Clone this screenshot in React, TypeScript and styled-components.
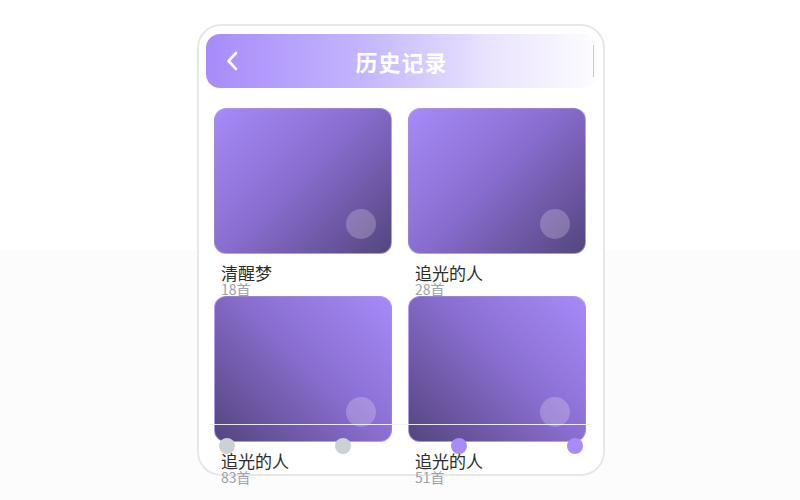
import React from 'react'
import styled, { createGlobalStyle } from 'styled-components'

const GlobalStyle = createGlobalStyle`
  html, body {
    margin: 0;
    padding: 0;
  }
  body {
    min-height: 500px;
    background: linear-gradient(180deg, #ffffff 0%, #ffffff 50%, #fcfcfd 50%, #fcfcfd 100%);
    font-family: "Noto Sans CJK SC", "Noto Sans", sans-serif;
  }
`

const albums = [
  { name: '清醒梦', count: 18, flip: false },
  { name: '追光的人', count: 28, flip: false },
  { name: '追光的人', count: 83, flip: true },
  { name: '追光的人', count: 51, flip: true },
]

const dots = [false, false, true, true]

export default function App() {
  return (
    <>
      <GlobalStyle />
      <Page>
        <Phone>
          <Header>
            <BackButton aria-label="back">
              <svg width="14" height="22" viewBox="0 0 14 22" fill="none">
                <path d="M11 3L3.5 11 11 19" stroke="#fff" strokeWidth="2.6" strokeLinecap="round" strokeLinejoin="round" />
              </svg>
            </BackButton>
            <Title>历史记录</Title>
          </Header>
          <Grid>
            {albums.map((a, i) => (
              <Item key={i}>
                <Cover flip={a.flip}>
                  <PlayDot />
                </Cover>
                <Name>{a.name}</Name>
                <Count>{a.count}首</Count>
              </Item>
            ))}
          </Grid>
          <Track />
          <Dots>
            {dots.map((on, i) => (
              <Dot key={i} active={on} />
            ))}
          </Dots>
        </Phone>
      </Page>
    </>
  )
}

const Page = styled.div`
  display: flex;
  justify-content: center;
  padding: 24px 0 0 2px;
`

const Phone = styled.div`
  position: relative;
  width: 408px;
  height: 452px;
  box-sizing: border-box;
  border: 2px solid #e6e7ea;
  border-radius: 24px;
  background: #fff;
  padding: 8px 6px 0 7px;
`

const Header = styled.div`
  position: relative;
  height: 54px;
  border-radius: 14px;
  background: linear-gradient(90deg, #a78bfa 0%, #c4b5fd 40%, #e9e3fe 72%, #fdfcff 100%);
  display: flex;
  align-items: center;
  justify-content: center;
  &::after {
    content: '';
    position: absolute;
    right: 3px;
    top: 11px;
    width: 1px;
    height: 32px;
    background: #c9bbfc;
  }
`

const BackButton = styled.div`
  position: absolute;
  left: 19px;
  top: 16px;
  display: flex;
`

const Title = styled.h1`
  margin: 0;
  color: #fff;
  font-size: 22px;
  font-weight: 700;
  letter-spacing: 1px;
`

const Grid = styled.div`
  display: grid;
  grid-template-columns: 178px 178px;
  column-gap: 16px;
  padding: 20px 0 0 8px;
`

const Item = styled.div`
  display: flex;
  flex-direction: column;
  height: 188px;
`

const Cover = styled.div<{ flip: boolean }>`
  position: relative;
  height: 146px;
  box-sizing: border-box;
  border-radius: 12px;
  border: 1px solid rgba(196, 181, 253, 0.55);
  background: linear-gradient(${(p) => (p.flip ? '225deg' : '135deg')}, #a68af8 0%, #8a6fd2 45%, #54457e 100%);
  flex-shrink: 0;
`

const PlayDot = styled.div`
  position: absolute;
  right: 15px;
  bottom: 14px;
  width: 30px;
  height: 30px;
  border-radius: 50%;
  background: rgba(255, 255, 255, 0.22);
`

const Name = styled.div`
  margin-top: 9px;
  padding-left: 7px;
  font-size: 17px;
  line-height: 19px;
  font-weight: 400;
  color: #2b2b2b;
`

const Count = styled.div`
  padding-left: 7px;
  font-size: 14px;
  line-height: 14px;
  color: #9ca1aa;
`

const Track = styled.div`
  position: absolute;
  left: 10px;
  top: 398px;
  width: 384px;
  height: 1px;
  background: rgba(238, 239, 242, 0.95);
`

const Dots = styled.div`
  position: absolute;
  left: 20px;
  top: 412px;
  width: 364px;
  display: flex;
  justify-content: space-between;
`

const Dot = styled.div<{ active: boolean }>`
  width: 16px;
  height: 16px;
  border-radius: 50%;
  background: ${(p) => (p.active ? '#a78bfa' : '#cdd0d5')};
`
